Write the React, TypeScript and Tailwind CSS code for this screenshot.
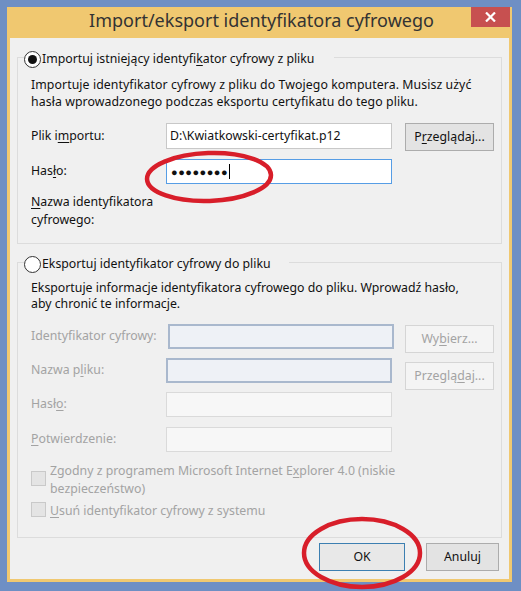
import React from "react";

const F = { fontFamily: '"Noto Sans", "Open Sans", sans-serif' };

function U({ children }: { children: React.ReactNode }) {
  return <span className="underline underline-offset-2">{children}</span>;
}

function Btn({
  children,
  w,
  disabled,
  def,
}: {
  children: React.ReactNode;
  w: string;
  disabled?: boolean;
  def?: boolean;
}) {
  const base = "h-[28px] flex items-center justify-center text-[12.3px] shrink-0";
  const look = disabled
    ? "border border-[#d5d5d5] bg-[#f4f4f4] text-[#a3a3a3]"
    : def
    ? "border border-[#3c7fb1] bg-[#e8e8e8] text-[#111]"
    : "border border-[#acacac] bg-[#e3e3e3] text-[#111]";
  return <div className={`${base} ${look} ${w}`}>{children}</div>;
}

export default function App() {
  return (
    <div
      className="w-[521px] h-[591px] bg-[#6e8fc4] pt-[7px] pl-[7px] pr-[9px] pb-[9px]"
      style={F}
    >
      <div className="w-full h-full bg-[#f0c870] px-[3px] pb-[3px] flex flex-col">
        {/* title bar */}
        <div className="relative h-[31px] shrink-0 flex justify-center">
          <div className="text-[18px] leading-[24px] text-[#333] pt-[1px] pl-[4px]">
            Import/eksport identyfikatora cyfrowego
          </div>
          <div className="absolute right-[-1px] top-0 w-[39px] h-[20px] bg-[#c75050] flex items-center justify-center">
            <svg width="11" height="10" viewBox="0 0 11 10">
              <path d="M1 0.5 L10 9.5 M10 0.5 L1 9.5" stroke="#fff" strokeWidth="2.2" />
            </svg>
          </div>
        </div>
        {/* content */}
        <div className="flex-1 bg-[#f0f0f0] px-[7px] pt-[19px] text-[12.3px] text-[#111] flex flex-col">
          {/* group 1 */}
          <div className="relative border border-[#dcdcdc] h-[187px] pl-[13px] pt-[18px]">
            <div className="absolute -top-[9px] left-[6px] flex items-center bg-[#f0f0f0] pr-[20px] h-[17px]">
              <div className="w-[17px] h-[17px] rounded-full border border-[#333] bg-white flex items-center justify-center mr-[1px] mt-[3px]">
                <div className="w-[9px] h-[9px] rounded-full bg-[#111]" />
              </div>
              <span className="mt-[3px]">
                Importuj istniejący identyfi<U>k</U>ator cyfrowy z pliku
              </span>
            </div>
            <div className="leading-[17px] tracking-[0.08px]">
              Importuje identyfikator cyfrowy z pliku do Twojego komputera. Musisz użyć
              <br />
              hasła wprowadzonego podczas eksportu certyfikatu do tego pliku.
            </div>
            <div className="flex items-start h-[26px] mt-[13px]">
              <div className="w-[135px] h-[26px] flex items-center">
                Plik i<U>m</U>portu:
              </div>
              <div className="w-[226px] h-[26px] border border-[#c8c8c8] bg-white flex items-center px-[3px]">
                D:\Kwiatkowski-certyfikat.p12
              </div>
              <div className="ml-[13px]">
                <Btn w="w-[89px]">
                  P<U>r</U>zeglądaj...
                </Btn>
              </div>
            </div>
            <div className="flex items-start h-[25px] mt-[10px]">
              <div className="w-[135px] h-[25px] flex items-center">
                Has<U>ł</U>o:
              </div>
              <div className="w-[226px] h-[25px] border border-[#569de5] bg-white flex items-center px-[4px]">
                <span className="text-[11px] tracking-[0.5px] leading-none">●●●●●●●●</span>
                <span className="w-px h-[15px] bg-black ml-[1px]" />
              </div>
            </div>
            <div className="leading-[18px] mt-[9px]">
              <U>N</U>azwa identyfikatora
              <br />
              cyfrowego:
            </div>
          </div>
          {/* group 2 */}
          <div className="relative border border-[#dcdcdc] h-[276px] mt-[18px] pl-[13px] pt-[17px]">
            <div className="absolute -top-[9px] left-[6px] flex items-center bg-[#f0f0f0] pr-[18px] h-[17px]">
              <div className="w-[17px] h-[17px] rounded-full border border-[#333] bg-white mr-[1px] mt-[3px]" />
              <span className="mt-[3px]">Eksportuj identyfikator cyfrowy do pliku</span>
            </div>
            <div className="leading-[16px]">
              Eksportuje informacje identyfikatora cyfrowego do pliku. Wprowadź hasło,
              <br />
              aby chronić te informacje.
            </div>
            <div className="text-[#a3a3a3]">
              <div className="flex items-start h-[25px] mt-[12px]">
                <div className="w-[137px] h-[25px] flex items-center">Identyfikator cyfrowy:</div>
                <div className="w-[226px] h-[25px] border-2 border-[#a9b8cd] bg-[#eef1f6]" />
                <div className="ml-[11px] mt-[1px]">
                  <Btn w="w-[89px]" disabled>
                    Wy<U>b</U>ierz...
                  </Btn>
                </div>
              </div>
              <div className="flex items-start h-[25px] mt-[9px]">
                <div className="w-[135px] h-[25px] flex items-center">
                  Nazwa p<U>l</U>iku:
                </div>
                <div className="w-[226px] h-[25px] border-2 border-[#a9b8cd] bg-[#eef1f6]" />
                <div className="ml-[13px] mt-[4px]">
                  <Btn w="w-[89px]" disabled>
                    Przeglą<U>d</U>aj...
                  </Btn>
                </div>
              </div>
              <div className="flex items-start h-[25px] mt-[9px]">
                <div className="w-[135px] h-[25px] flex items-center">
                  Hasł<U>o</U>:
                </div>
                <div className="w-[226px] h-[25px] border border-[#dadada] bg-[#f7f7f7]" />
              </div>
              <div className="flex items-start h-[25px] mt-[10px]">
                <div className="w-[135px] h-[25px] flex items-center">
                  <U>P</U>otwierdzenie:
                </div>
                <div className="w-[226px] h-[25px] border border-[#dadada] bg-[#f7f7f7]" />
              </div>
              <div className="flex items-start mt-[10px] leading-[18px]">
                <div className="w-[15px] h-[15px] border border-[#c9c9c9] bg-[#e4e4e4] mt-[9px] mr-[4px] shrink-0" />
                <div>
                  Zgodny z programem Microsoft Internet E<U>x</U>plorer 4.0 (niskie
                  <br />
                  bezpieczeństwo)
                </div>
              </div>
              <div className="flex items-start mt-[4px] leading-[18px]">
                <div className="w-[15px] h-[15px] border border-[#c9c9c9] bg-[#e4e4e4] mt-[0px] mr-[4px] shrink-0" />
                <div>
                  <U>U</U>suń identyfikator cyfrowy z systemu
                </div>
              </div>
            </div>
          </div>
          {/* buttons */}
          <div className="flex justify-end mt-[5px] pr-[3px]">
            <Btn w="w-[86px]" def>
              OK
            </Btn>
            <div className="ml-[21px]">
              <Btn w="w-[73px]">Anuluj</Btn>
            </div>
          </div>
        </div>
      </div>
      {/* red marker ellipses (overlay) */}
      <svg className="absolute left-0 top-0 pointer-events-none" width="521" height="591">
        <ellipse cx="209" cy="177" rx="62" ry="24" fill="none" stroke="#d81e2a" strokeWidth="4.5" transform="rotate(-2 209 177)" />
        <ellipse cx="362" cy="553" rx="58" ry="34" fill="none" stroke="#d81e2a" strokeWidth="4.5" />
      </svg>
    </div>
  );
}
